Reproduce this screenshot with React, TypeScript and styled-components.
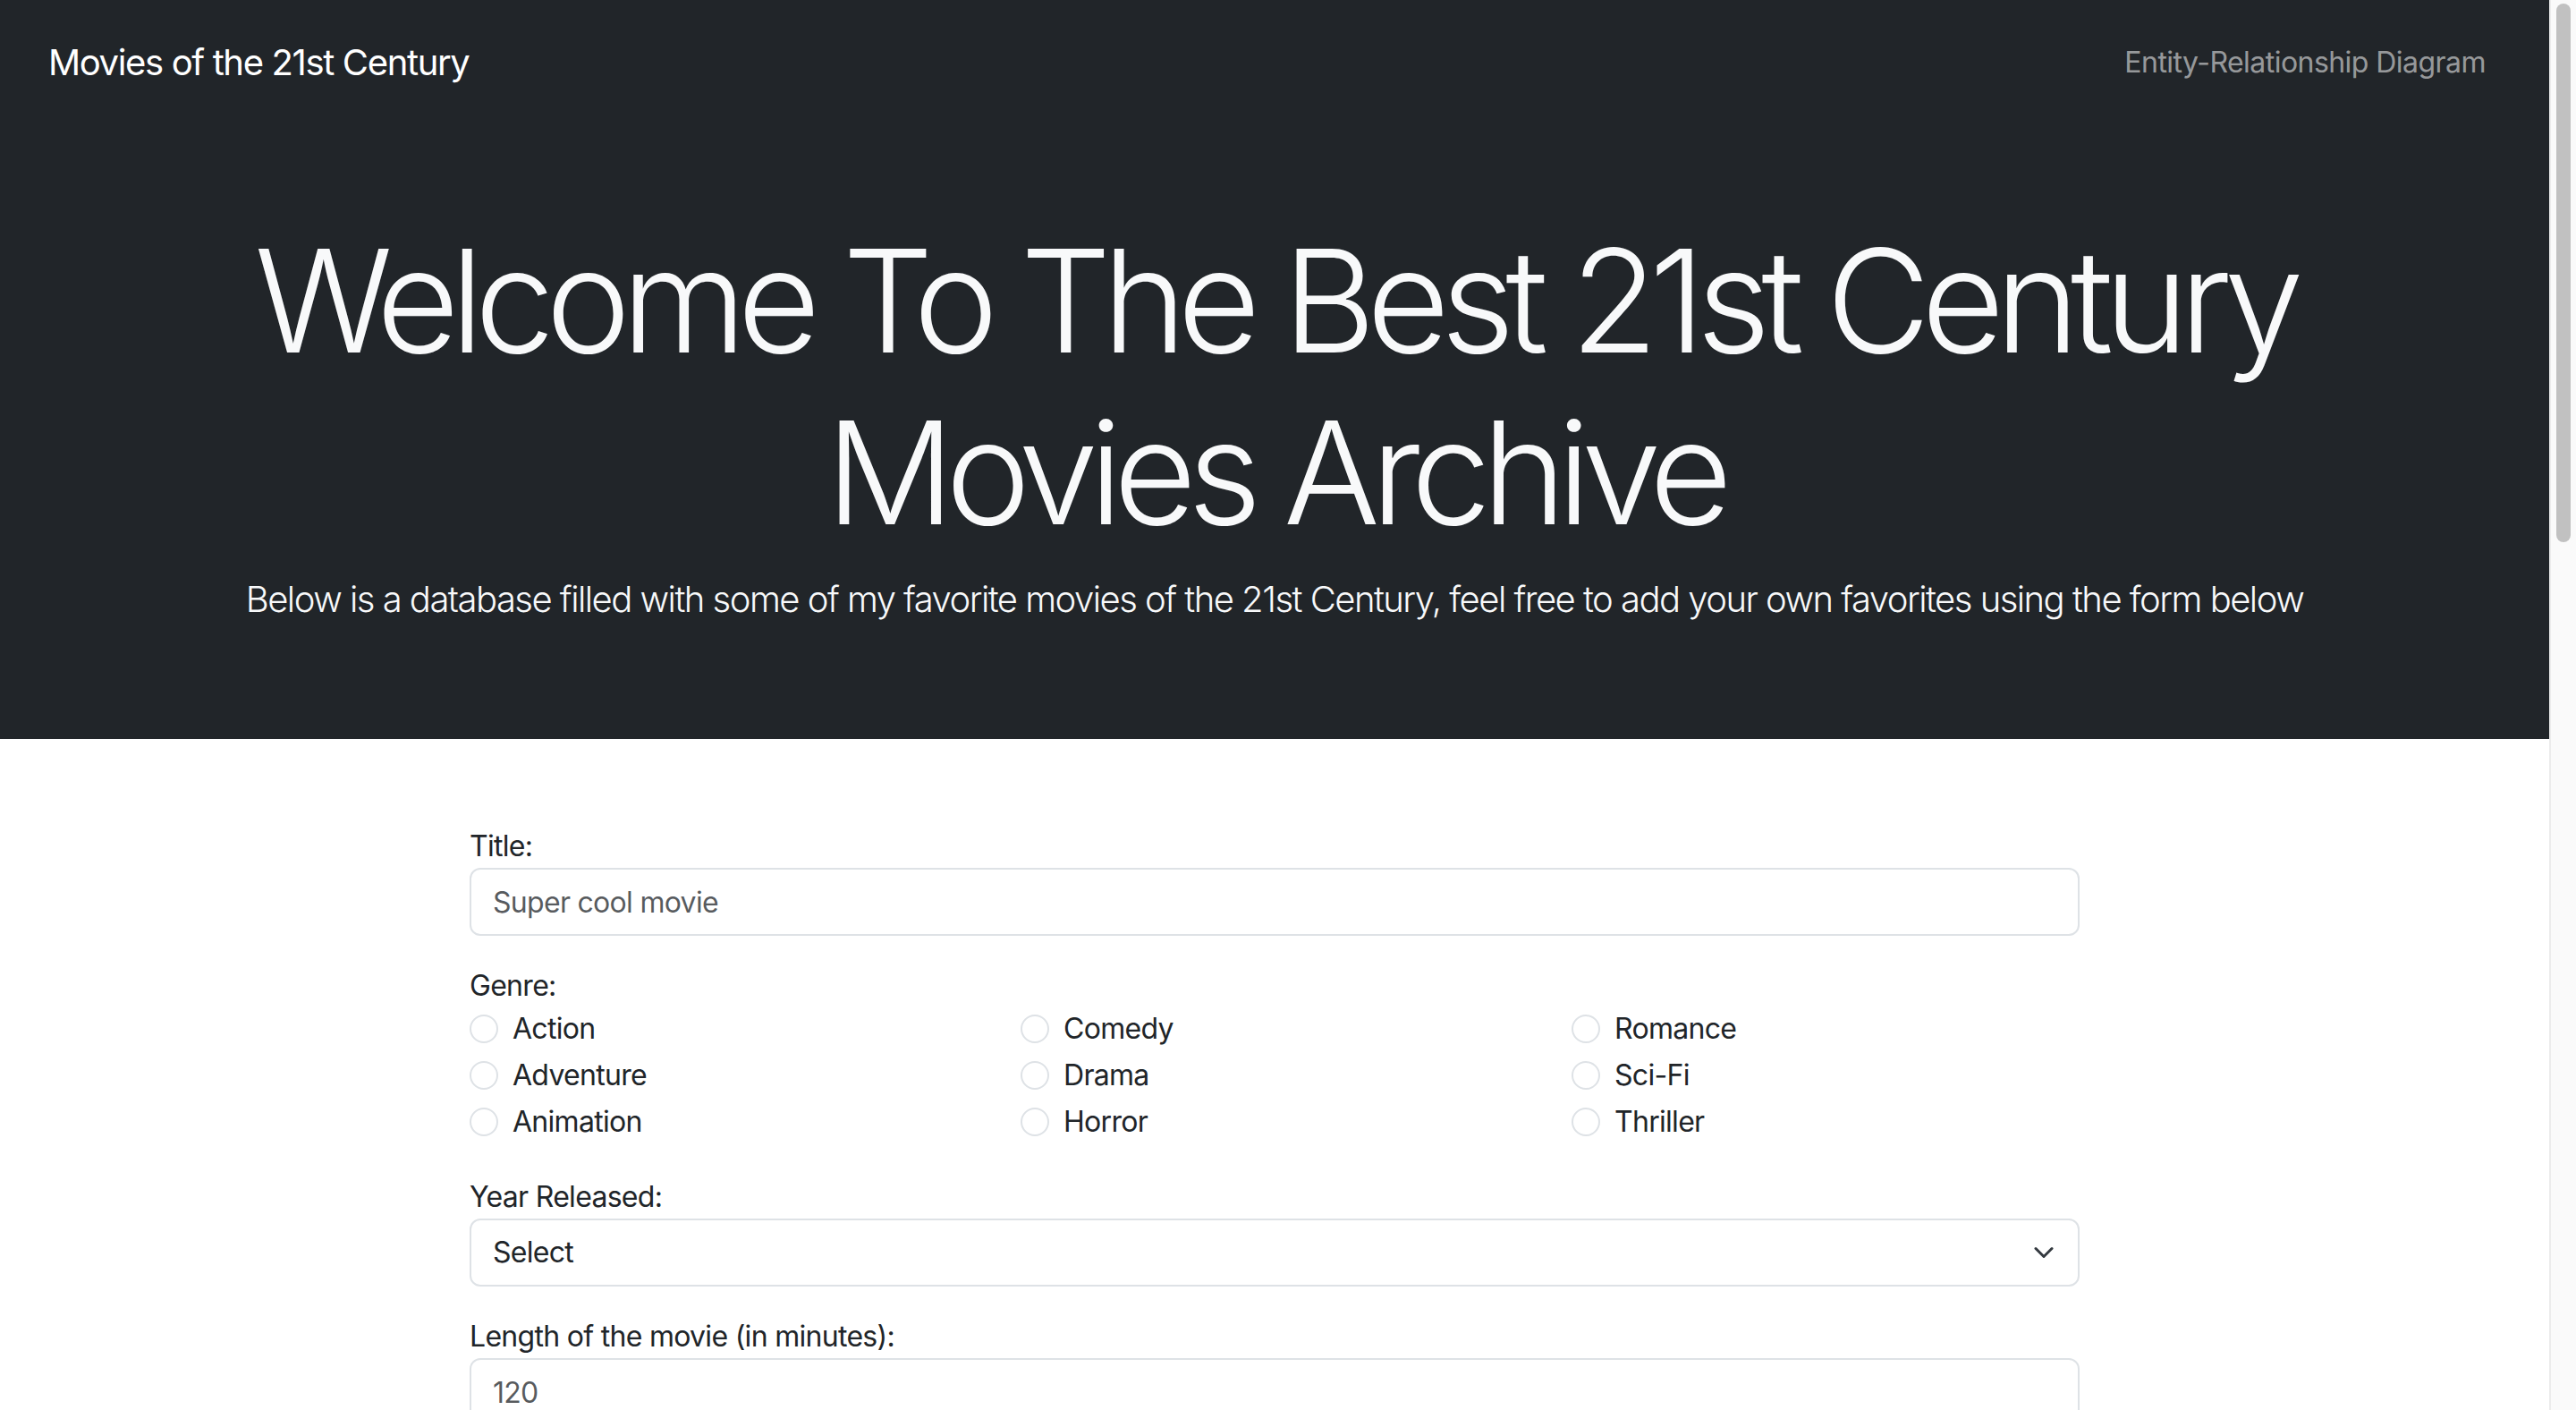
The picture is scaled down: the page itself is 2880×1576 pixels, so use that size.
import React from "react";
import styled, { createGlobalStyle } from "styled-components";

const GlobalStyle = createGlobalStyle`
  *, *::before, *::after { box-sizing: border-box; }
  html { scrollbar-width: none; }
  html::-webkit-scrollbar { display: none; }
  body {
    margin: 0;
    font-family: Inter, "Noto Sans", sans-serif;
    font-size: 32px;
    line-height: 1.5;
    letter-spacing: -0.022em;
    color: #212529;
    background: #fff;
  }
`;

const Page = styled.div`
  margin-right: 30px;
`;

const ScrollRail = styled.div`
  position: fixed;
  top: 0;
  right: 0;
  bottom: 0;
  width: 30px;
  background: #fafafa;
  border-left: 2px solid #ececec;
  z-index: 10;
`;

const ScrollThumb = styled.div`
  position: absolute;
  top: 4px;
  left: 6px;
  width: 16px;
  height: 602px;
  border-radius: 8px;
  background: #c1c1c1;
`;

const Header = styled.header`
  background: #212529;
  color: #f8f9fa;
  padding-bottom: 126px;
`;

const Navbar = styled.nav`
  display: flex;
  align-items: center;
  justify-content: space-between;
  height: 140px;
  padding: 0 71px 0 54px;
`;

const Brand = styled.a`
  font-size: 40px;
  line-height: 60px;
  letter-spacing: -0.034em;
  color: #fff;
  text-decoration: none;
`;

const NavLink = styled.a`
  font-size: 32px;
  line-height: 48px;
  letter-spacing: -0.017em;
  color: rgba(255, 255, 255, 0.55);
  text-decoration: none;
`;

const Hero = styled.section`
  text-align: center;
  padding: 0 24px;
`;

const HeroTitle = styled.h1`
  margin: 100px 0 16px;
  font-size: 160px;
  font-weight: 300;
  line-height: 1.2;
  letter-spacing: -0.063em;
  color: #f8f9fa;
`;

const Lead = styled.p`
  margin: 0;
  font-size: 40px;
  font-weight: 300;
  line-height: 60px;
  letter-spacing: -0.038em;
  color: #f8f9fa;
`;

const Main = styled.main`
  padding-top: 96px;
  min-height: 3301px;
`;

const Form = styled.form`
  width: 1800px;
  margin: 0 auto;
`;

const Field = styled.div`
  margin-bottom: 32px;
`;

const Label = styled.label`
  display: block;
  font-size: 32px;
  line-height: 48px;
  color: #212529;
`;

const TextInput = styled.input`
  display: block;
  width: 100%;
  height: 76px;
  padding: 12px 24px;
  font-family: inherit;
  font-size: 32px;
  line-height: 48px;
  letter-spacing: inherit;
  color: #212529;
  background: #fff;
  border: 2px solid #dee2e6;
  border-radius: 12px;
  outline: none;
  &::placeholder {
    color: rgba(33, 37, 41, 0.75);
  }
`;

const SelectWrap = styled.div`
  position: relative;
`;

const Select = styled.select`
  display: block;
  width: 100%;
  height: 76px;
  padding: 12px 72px 12px 24px;
  font-family: inherit;
  font-size: 32px;
  line-height: 48px;
  letter-spacing: inherit;
  color: #212529;
  background: #fff;
  border: 2px solid #dee2e6;
  border-radius: 12px;
  appearance: none;
  -webkit-appearance: none;
  outline: none;
`;

const Chevron = styled.svg`
  position: absolute;
  right: 24px;
  top: 50%;
  width: 32px;
  height: 24px;
  transform: translateY(-50%);
  pointer-events: none;
`;

const GenreGrid = styled.div`
  display: grid;
  grid-template-columns: repeat(3, 1fr);
  column-gap: 48px;
`;

const Check = styled.div`
  display: flex;
  align-items: flex-start;
  gap: 16px;
  min-height: 48px;
  margin-bottom: 4px;
`;

const Radio = styled.input`
  appearance: none;
  -webkit-appearance: none;
  flex-shrink: 0;
  width: 32px;
  height: 32px;
  margin: 8px 0 0;
  border: 2px solid #dee2e6;
  border-radius: 50%;
  background: #fff;
`;

const CheckLabel = styled.label`
  font-size: 32px;
  line-height: 48px;
  color: #212529;
`;

const genres = [
  ["Action", "Adventure", "Animation"],
  ["Comedy", "Drama", "Horror"],
  ["Romance", "Sci-Fi", "Thriller"],
];

export default function App() {
  return (
    <>
      <GlobalStyle />
      <ScrollRail aria-hidden="true">
        <ScrollThumb />
      </ScrollRail>
      <Page>
        <Header>
          <Navbar>
            <Brand href="#">Movies of the 21st Century</Brand>
            <NavLink href="#">Entity-Relationship Diagram</NavLink>
          </Navbar>
          <Hero>
            <HeroTitle>
              Welcome To The Best 21st Century
              <br />
              Movies Archive
            </HeroTitle>
            <Lead>
              Below is a database filled with some of my favorite movies of the 21st Century, feel free to add your
              own favorites using the form below
            </Lead>
          </Hero>
        </Header>
        <Main>
          <Form onSubmit={(e) => e.preventDefault()}>
            <Field>
              <Label htmlFor="title">Title:</Label>
              <TextInput id="title" type="text" placeholder="Super cool movie" />
            </Field>
            <Field>
              <Label>Genre:</Label>
              <GenreGrid>
                {genres.map((col, ci) => (
                  <div key={ci}>
                    {col.map((g) => (
                      <Check key={g}>
                        <Radio type="radio" name="genre" id={`genre-${g}`} value={g} />
                        <CheckLabel htmlFor={`genre-${g}`}>{g}</CheckLabel>
                      </Check>
                    ))}
                  </div>
                ))}
              </GenreGrid>
            </Field>
            <Field>
              <Label htmlFor="year">Year Released:</Label>
              <SelectWrap>
                <Select id="year" defaultValue="">
                  <option value="">Select</option>
                  {Array.from({ length: 24 }, (_, i) => 2000 + i).map((y) => (
                    <option key={y} value={y}>
                      {y}
                    </option>
                  ))}
                </Select>
                <Chevron viewBox="0 0 16 16" fill="none">
                  <path
                    d="m2 5 6 6 6-6"
                    stroke="#343a40"
                    strokeWidth="2"
                    strokeLinecap="round"
                    strokeLinejoin="round"
                  />
                </Chevron>
              </SelectWrap>
            </Field>
            <Field>
              <Label htmlFor="length">Length of the movie (in minutes):</Label>
              <TextInput id="length" type="number" placeholder="120" />
            </Field>
          </Form>
        </Main>
      </Page>
    </>
  );
}
